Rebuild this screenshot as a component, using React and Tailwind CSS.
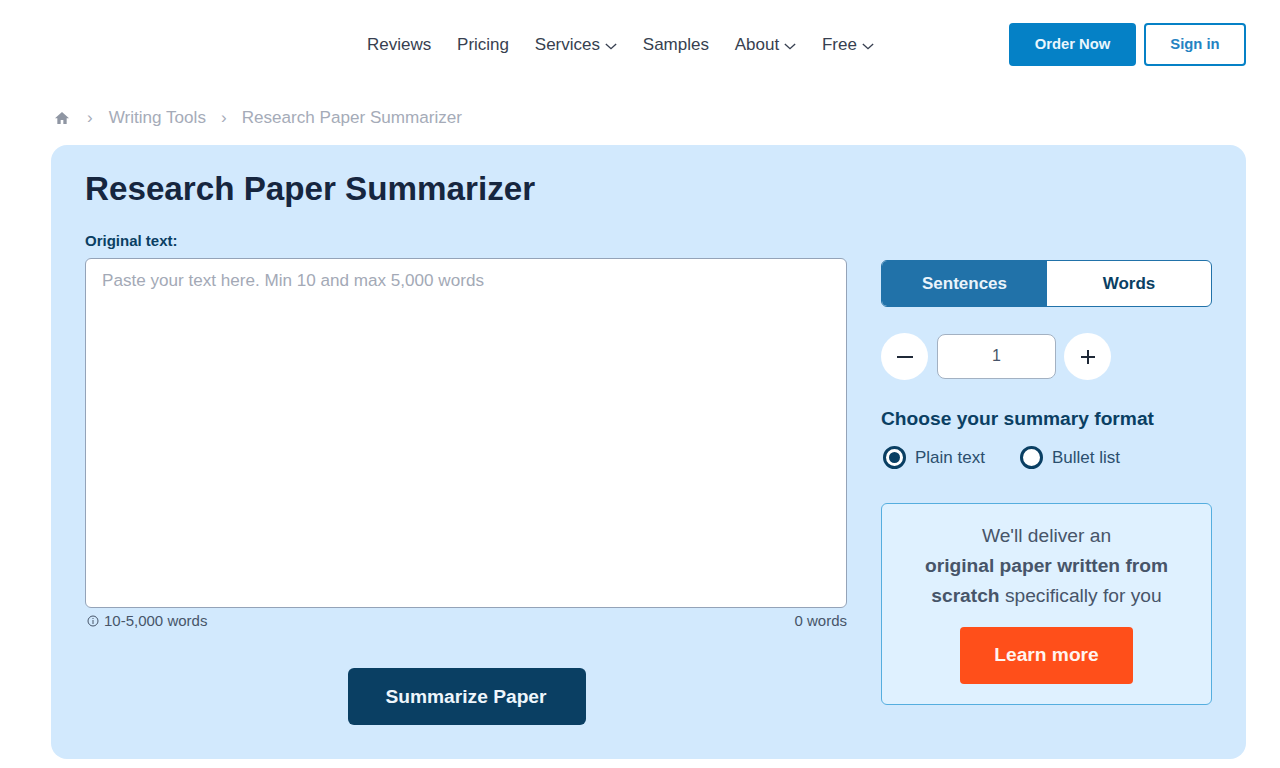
import { useState } from 'react';

const font = 'font-["Liberation_Sans",Arial,sans-serif]';

function Chevron() {
    return (
        <svg viewBox="0 0 14 8" className="w-[12px] h-[7px] ml-[5px] mt-[3px]" fill="none" stroke="currentColor" strokeWidth="1.6">
            <path d="M1 1l6 5.500L13 1" />
        </svg>
    );
}

function NavItem({ label, dropdown }) {
    return (
        <a className="flex items-center text-[#373F50] text-[17px] leading-6">
            {label}
            {dropdown && <Chevron />}
        </a>
    );
}

function Radio({ label, checked }) {
    return (
        <label className="flex items-center">
            <span className="w-[23px] h-[23px] rounded-full border-[3px] border-[#0A3F63] bg-white flex items-center justify-center">
                {checked && <span className="w-[11px] h-[11px] rounded-full bg-[#0A3F63]" />}
            </span>
            <span className="ml-[9px] pt-[1px] text-[#2B4F6E] text-[17px] leading-6">{label}</span>
        </label>
    );
}

export default function App() {
    const [count] = useState(1);

    return (
        <div className={`${font} bg-white h-[768px] overflow-hidden pl-[51px] pr-[34px]`}>
            {/* header */}
            <header className="h-[88px] flex items-center pl-[316px]">
                <nav className="flex items-center gap-[25.8px] pt-[2px]">
                    <NavItem label="Reviews" />
                    <NavItem label="Pricing" />
                    <NavItem label="Services" dropdown />
                    <NavItem label="Samples" />
                    <NavItem label="About" dropdown />
                    <NavItem label="Free" dropdown />
                </nav>
                <div className="ml-auto flex items-center gap-[8px]">
                    <a className="w-[127px] h-[43px] rounded bg-[#0581C6] text-[#EAF6FD] font-bold text-[14.8px] flex items-center justify-center">Order Now</a>
                    <a className="w-[102px] h-[43px] rounded border-2 border-[#0581C6] text-[#2583C2] font-bold text-[14.8px] flex items-center justify-center">Sign in</a>
                </div>
            </header>

            {/* breadcrumb */}
            <div className="flex items-center h-[57px] pt-[2px] text-[#A5ABB8] text-[17.1px] leading-6">
                <svg viewBox="0 0 24 24" className="w-[16px] h-[16px] ml-[3px] text-[#8F96A3]" fill="currentColor">
                    <path d="M12 3L1.500 12.500H5V21h5v-6h4v6h5v-8.500h3.500z" />
                </svg>
                <span className="ml-[17px] mr-[16px]">›</span>
                <span>Writing Tools</span>
                <span className="ml-[15px] mr-[15px]">›</span>
                <span>Research Paper Summarizer</span>
            </div>

            {/* panel */}
            <main className="bg-[#D2E9FD] rounded-2xl h-[614px] pt-[24px] px-[34px]">
                <h1 className="text-[#16263F] text-[33.2px] leading-10 font-bold">Research Paper Summarizer</h1>
                <div className="flex gap-[34px] mt-[22px]">
                    <div className="w-[762px]">
                        <label className="block text-[#0A3F63] text-[15px] leading-5 font-bold mb-[7px]">Original text:</label>
                        <textarea
                            className="block w-full h-[350px] bg-white rounded-md border border-[#94A3B8] px-4 py-[10px] text-[17.1px] leading-6 resize-none outline-none placeholder:text-[#A3A9B6]"
                            placeholder="Paste your text here. Min 10 and max 5,000 words"
                        />
                        <div className="flex justify-between mt-[3px] text-[#475569] text-[15px] leading-5">
                            <span className="flex items-center">
                                <svg viewBox="0 0 12 12" className="w-[12px] h-[12px] ml-[2px] mr-[5px]" fill="none" stroke="currentColor">
                                    <circle cx="6" cy="6" r="5" />
                                    <path d="M6 5v4M6 3v1" />
                                </svg>
                                10-5,000 words
                            </span>
                            <span>0 words</span>
                        </div>
                        <div className="flex justify-center mt-[37px] pl-[2px]">
                            <button className="w-[238px] h-[57px] pt-[2px] pr-[2px] rounded-md bg-[#0A3F63] text-[#EEF6FC] text-[19.2px] font-bold">Summarize Paper</button>
                        </div>
                    </div>

                    {/* right column */}
                    <div className="w-[331px] pt-[29px]">
                        <div className="flex h-[47px] rounded-md border border-[#2172A9] bg-white overflow-hidden font-bold">
                            <button className="w-[165px] bg-[#2172A9] text-[#EAF4FB] text-[17px]">Sentences</button>
                            <button className="flex-1 text-[#0A3F63] text-[17px]">Words</button>
                        </div>
                        <div className="flex items-center mt-[26px] text-[#1F2937]">
                            <button className="w-[47px] h-[47px] rounded-full bg-white flex items-center justify-center">
                                <svg viewBox="0 0 16 16" className="w-4 h-4" stroke="currentColor" strokeWidth="2"><path d="M0 8h16" /></svg>
                            </button>
                            <div className="w-[119px] h-[45px] ml-[9px] mr-[8px] pb-[2px] rounded-lg bg-white border border-[#A3B1C2] text-[#475569] text-base flex items-center justify-center">{count}</div>
                            <button className="w-[47px] h-[47px] rounded-full bg-white flex items-center justify-center">
                                <svg viewBox="0 0 16 16" className="w-4 h-4" stroke="currentColor" strokeWidth="2"><path d="M1 8h14M8 1v14" /></svg>
                            </button>
                        </div>
                        <h2 className="mt-[25px] text-[#0A3F63] text-[19.2px] leading-7 font-bold">Choose your summary format</h2>
                        <div className="flex items-center gap-[35px] mt-[12px] pl-[2px]">
                            <Radio label="Plain text" checked />
                            <Radio label="Bullet list" />
                        </div>
                        <div className="mt-[33px] h-[202px] rounded-md border border-[#55AEDF] bg-[#DFF1FF] pt-[17px] flex flex-col items-center">
                            <p className="text-center text-[#475569] text-[19.2px] leading-[30px]">
                                We'll deliver an<br /><b>original paper written from</b><br /><b>scratch</b> specifically for you
                            </p>
                            <a className="mt-[16px] w-[173px] h-[57px] rounded bg-[#FF4F1A] text-[#FFF4EF] text-[19.2px] font-bold flex items-center justify-center">Learn more</a>
                        </div>
                    </div>
                </div>
            </main>
        </div>
    );
}
